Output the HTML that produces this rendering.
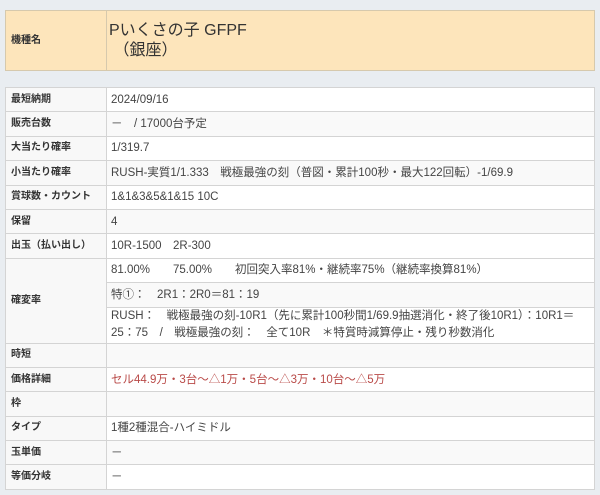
<!DOCTYPE html>
<html><head><meta charset="utf-8"><style>
body{margin:0;background:#e9edf1;font-family:"Liberation Sans","Noto Sans CJK JP",sans-serif;color:#333;width:600px;height:495px;overflow:hidden}
table{border-collapse:collapse;position:absolute;left:5px;width:590px;table-layout:fixed}
td{border:1px solid #d4d4d4;padding:0 0 0 4px;font-size:11.5px;line-height:14px;vertical-align:middle;color:#444}
td.l{width:95px;font-weight:bold;font-size:10px;background:#f8f8f8;padding-left:5px;color:#333}
#t1{top:10px;height:61px;border:1px solid #c8c8c8}
#t1 td{background:#fde5bb;border-color:#d6c9ad}
#t1 td.v{font-size:16px;line-height:20px;padding-left:2px;color:#333}
#t2{top:87px;background:#fff}
#t2 tr{height:24.4px}
#t2 tr.g td.v{background:#f9f9f9}
.red{color:#b94a48 !important}
</style></head><body>
<table id="t1"><tr><td class="l">機種名</td><td class="v">Pいくさの子 GFPF<br>&nbsp;（銀座）</td></tr></table>
<table id="t2">
<tr><td class="l">最短納期</td><td class="v">2024/09/16</td></tr>
<tr class="g"><td class="l">販売台数</td><td class="v">－　/ 17000台予定</td></tr>
<tr><td class="l">大当たり確率</td><td class="v">1/319.7</td></tr>
<tr class="g"><td class="l">小当たり確率</td><td class="v">RUSH-実質1/1.333　戦極最強の刻（普図・累計100秒・最大122回転）-1/69.9</td></tr>
<tr><td class="l">賞球数・カウント</td><td class="v">1&amp;1&amp;3&amp;5&amp;1&amp;15 10C</td></tr>
<tr class="g"><td class="l">保留</td><td class="v">4</td></tr>
<tr><td class="l">出玉（払い出し）</td><td class="v">10R-1500　2R-300</td></tr>
<tr><td class="l" rowspan="3">確変率</td><td class="v">81.00%　　75.00%　　初回突入率81%・継続率75%（継続率換算81%）</td></tr>
<tr class="g"><td class="v">特①：　2R1：2R0＝81：19</td></tr>
<tr style="height:36px"><td class="v" style="line-height:17px;padding-right:6px">RUSH：　戦極最強の刻-10R1（先に累計100秒間1/69.9抽選消化・終了後10R1）：10R1＝25：75　/　戦極最強の刻：　全て10R　＊特賞時減算停止・残り秒数消化</td></tr>
<tr class="g"><td class="l">時短</td><td class="v"></td></tr>
<tr><td class="l">価格詳細</td><td class="v red">セル44.9万・3台～△1万・5台～△3万・10台～△5万</td></tr>
<tr class="g"><td class="l">枠</td><td class="v"></td></tr>
<tr><td class="l">タイプ</td><td class="v">1種2種混合-ハイミドル</td></tr>
<tr class="g"><td class="l">玉単価</td><td class="v">－</td></tr>
<tr><td class="l">等価分岐</td><td class="v">－</td></tr>
</table>
</body></html>
